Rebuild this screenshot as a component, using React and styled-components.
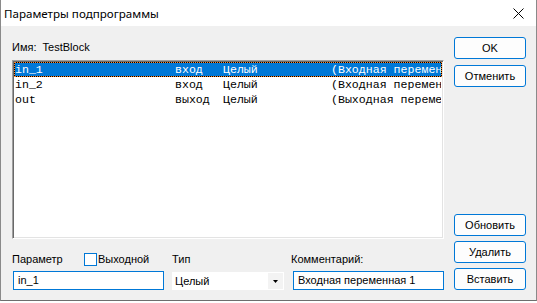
import React from 'react';
import styled, { createGlobalStyle } from 'styled-components';

const GlobalStyle = createGlobalStyle`
  html, body {
    margin: 0;
    padding: 0;
    background: #ffffff;
  }
  * {
    box-sizing: border-box;
  }
`;

const rows = [
  { name: 'in_1', dir: 'вход', type: 'Целый', comment: '(Входная переменная 1)' },
  { name: 'in_2', dir: 'вход', type: 'Целый', comment: '(Входная переменная 2)' },
  { name: 'out', dir: 'выход', type: 'Целый', comment: '(Выходная переменная)' },
];

const App = () => {
  return (
    <>
      <GlobalStyle />
      <Window>
        <TitleBar>
          <Title>Параметры подпрограммы</Title>
          <CloseIcon viewBox="0 0 11 11">
            <path d="M0.5 0.5 L10.5 10.5 M10.5 0.5 L0.5 10.5" stroke="#000" strokeWidth="1" />
          </CloseIcon>
        </TitleBar>
        <Body>
          <Main>
            <NameLabel>Имя:&nbsp; TestBlock</NameLabel>
            <ListBox>
              {rows.map((r, i) => (
                <Row key={r.name} selected={i === 0}>
                  <Cell>{r.name}</Cell>
                  <Cell>{r.dir}</Cell>
                  <Cell>{r.type}</Cell>
                  <Cell>{r.comment}</Cell>
                </Row>
              ))}
            </ListBox>
            <Fields>
              <LabelRow>
                <ParamLabel>Параметр</ParamLabel>
                <CheckLabel>
                  <CheckBox />
                  Выходной
                </CheckLabel>
              </LabelRow>
              <FieldLabel>Тип</FieldLabel>
              <FieldLabel shift={-1}>Комментарий:</FieldLabel>
              <TextBox>in_1</TextBox>
              <Select>
                <span>Целый</span>
                <Arrow>
                  <svg width="5" height="3" viewBox="0 0 5 3">
                    <path d="M0 0 H5 L2.5 3 Z" fill="#000" />
                  </svg>
                </Arrow>
              </Select>
              <TextBox>Входная переменная 1</TextBox>
            </Fields>
          </Main>
          <Side>
            <Button>OK</Button>
            <Button>Отменить</Button>
            <Bottom>
              <Button>Обновить</Button>
              <Button>Удалить</Button>
              <Button>Вставить</Button>
            </Bottom>
          </Side>
        </Body>
      </Window>
    </>
  );
};

export default App;

const Window = styled.div`
  width: 537px;
  height: 301px;
  display: flex;
  flex-direction: column;
  border-left: 1px solid #8a8a8a;
  border-right: 1px solid #8a8a8a;
  border-bottom: 1px solid #6e6e6e;
  font-family: 'Liberation Sans', Arial, sans-serif;
  font-size: 11px;
  color: #000;
`;

const TitleBar = styled.div`
  height: 26px;
  flex: none;
  background: #fff;
  display: flex;
  align-items: center;
  justify-content: space-between;
  padding: 1px 12px 0 3px;
`;

const Title = styled.div`
  font-family: 'Noto Sans', 'Open Sans', sans-serif;
  font-size: 11.6px;
  color: #000;
`;

const CloseIcon = styled.svg`
  width: 11px;
  height: 11px;
`;

const Body = styled.div`
  flex: 1;
  background: #f0f0f0;
  display: flex;
  gap: 10px;
  padding: 11px 9px 10px 11px;
`;

const Main = styled.div`
  width: 432px;
  display: flex;
  flex-direction: column;
`;

const NameLabel = styled.div`
  height: 14px;
  line-height: 14px;
  margin-top: 3px;
`;

const ListBox = styled.div`
  margin-top: 6px;
  height: 179px;
  background: #fff;
  border-top: 1px solid #a0a0a0;
  border-left: 1px solid #a0a0a0;
  border-right: 1px solid #fff;
  border-bottom: 1px solid #fff;
  box-shadow: inset 1px 1px 0 #696969, inset -1px -1px 0 #e3e3e3;
  padding: 1px 1px 2px 1px;
  font-family: 'Liberation Mono', 'Courier New', monospace;
  font-size: 11.6px;
  overflow: hidden;
`;

const Row = styled.div`
  display: grid;
  grid-template-columns: 160px 48px 108px 1fr;
  height: 15px;
  line-height: 13px;
  white-space: nowrap;
  color: ${({ selected }) => (selected ? '#fff' : '#000')};
  border: 1px dotted ${({ selected }) => (selected ? '#ff8728' : 'transparent')};
  background: ${({ selected }) =>
    selected
      ? 'linear-gradient(#0078d7, #0078d7) padding-box, #000 border-box'
      : 'transparent'};
`;

const Cell = styled.span`
  overflow: hidden;
`;

const Fields = styled.div`
  margin-top: 13px;
  display: grid;
  grid-template-columns: 152px 112px 152px;
  column-gap: 8px;
  row-gap: 5px;
  grid-template-rows: 14px 19px;
`;

const LabelRow = styled.div`
  display: flex;
  align-items: center;
`;

const ParamLabel = styled.span`
  width: 72px;
`;

const CheckLabel = styled.label`
  display: flex;
  align-items: center;
`;

const CheckBox = styled.span`
  width: 13px;
  height: 13px;
  background: #fff;
  border: 1px solid #0078d7;
  margin-right: 1px;
`;

const FieldLabel = styled.div`
  line-height: 14px;
  margin-left: ${({ shift }) => shift || 0}px;
`;

const TextBox = styled.div`
  margin-left: 1px;
  height: 19px;
  background: #fff;
  border: 1px solid #0078d7;
  padding: 0 4px;
  line-height: 17px;
  white-space: nowrap;
`;

const Select = styled.div`
  height: 18px;
  margin-top: 1px;
  background: #fff;
  display: flex;
  align-items: center;
  justify-content: space-between;
  padding: 0 1px 0 3px;
`;

const Arrow = styled.span`
  width: 15px;
  height: 16px;
  background: #f3f3f3;
  display: flex;
  align-items: center;
  justify-content: center;
`;

const Side = styled.div`
  width: 72px;
  display: flex;
  flex-direction: column;
  gap: 6px;
`;

const Bottom = styled.div`
  margin-top: auto;
  display: flex;
  flex-direction: column;
  gap: 5px;
`;

const Button = styled.button`
  height: 22px;
  width: 72px;
  padding: 0;
  background: #fdfdfd;
  border: 1px solid #0078d7;
  border-radius: 3px;
  font-family: 'Liberation Sans', Arial, sans-serif;
  font-size: 11px;
  line-height: 20px;
  color: #000;
`;
